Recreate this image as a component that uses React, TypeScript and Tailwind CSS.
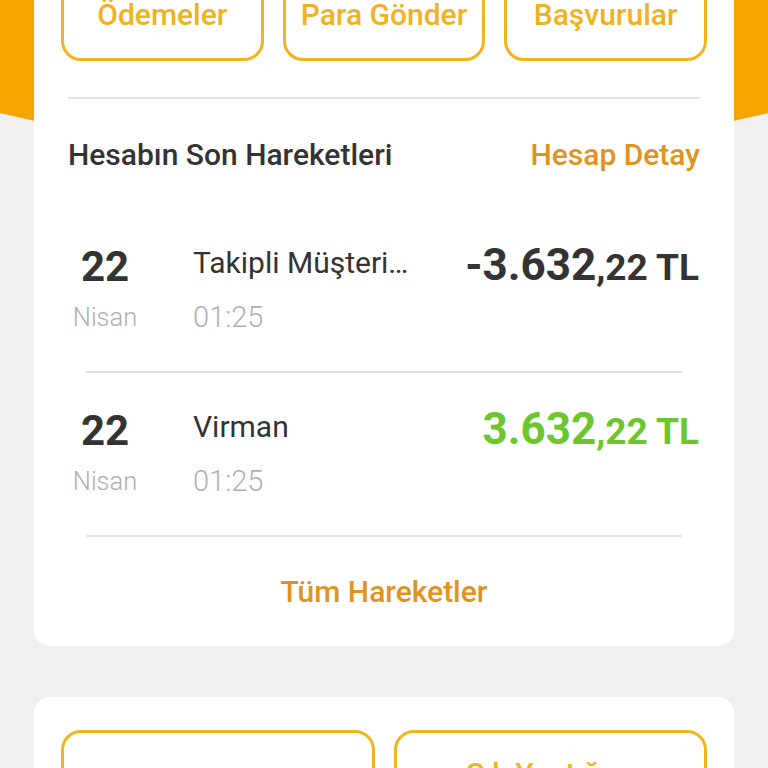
import React from 'react';

type Move = {
  day: string;
  month: string;
  title: string;
  time: string;
  whole: string;
  cents: string;
  positive: boolean;
};

const moves: Move[] = [
  { day: '22', month: 'Nisan', title: 'Takipli Müşteri…', time: '01:25', whole: '-3.632', cents: ',22 TL', positive: false },
  { day: '22', month: 'Nisan', title: 'Virman', time: '01:25', whole: '3.632', cents: ',22 TL', positive: true },
];

function QuickButton({ label }: { label: string }) {
  return (
    <button className="flex-1 h-[108px] rounded-[20px] border-[3px] border-[#f2b41c] bg-white flex items-end justify-center pb-[26px]">
      <span className="text-[30px] leading-[34px] font-medium text-[#f0b220]">{label}</span>
    </button>
  );
}

function MoveRow({ m }: { m: Move }) {
  return (
    <div className="mx-[52px] border-b-2 border-[#e4e4e4] flex items-start pt-[33px] pb-[29px]">
      <div className="w-[90px] -ml-[26px] flex flex-col items-center">
        <span className="text-[42px] leading-[50px] font-bold text-[#333333]">{m.day}</span>
        <span className="text-[25.5px] leading-[50px] font-light text-[#b0b0b0]">{m.month}</span>
      </div>
      <div className="ml-[43px] flex flex-col">
        <span className="text-[30px] leading-[42px] text-[#333333]">{m.title}</span>
        <span className="mt-2 text-[29px] leading-[50px] font-light text-[#b0b0b0]">{m.time}</span>
      </div>
      <div
        className={
          'ml-auto -mr-[17px] leading-[46px] font-bold whitespace-nowrap ' +
          (m.positive ? 'text-[#6cc62e]' : 'text-[#333333]')
        }
      >
        <span className="text-[44px]">{m.whole}</span>
        <span className="text-[37px]">{m.cents}</span>
      </div>
    </div>
  );
}

export default function App() {
  return (
    <div className="relative min-h-screen overflow-hidden bg-[#f1f0ef] font-['Roboto',sans-serif]">
      {/* orange header shape behind the first card */}
      <svg className="absolute left-0 top-0" width="768" height="220" viewBox="0 0 768 220">
        <path d="M0 0 H768 V113 Q384 205 0 113 Z" fill="#f5a400" />
      </svg>

      <div className="relative px-[34px] pb-10">
        {/* account card */}
        <div className="-mt-[71px] bg-white rounded-[16px]">
          <div className="flex gap-[19px] px-[27px] pt-[24px]">
            <QuickButton label="Ödemeler" />
            <QuickButton label="Para Gönder" />
            <QuickButton label="Başvurular" />
          </div>

          <div className="mx-[34px] mt-[36px] border-t-2 border-[#e4e4e4]" />

          <div className="h-[110px] px-[34px] flex items-center justify-between">
            <span className="text-[30px] font-medium text-[#333333]">Hesabın Son Hareketleri</span>
            <span className="text-[30px] font-medium text-[#e0931e]">Hesap Detay</span>
          </div>

          {moves.map((m, i) => (
            <MoveRow key={i} m={m} />
          ))}

          <div className="h-[109px] flex items-center justify-center">
            <span className="text-[30px] font-medium text-[#e0931e]">Tüm Hareketler</span>
          </div>
        </div>

        {/* shortcuts card */}
        <div className="mt-[51px] bg-white rounded-[16px] px-[27px] pt-[33px] pb-[30px] flex gap-[19px]">
          <button className="flex-1 h-[130px] rounded-[20px] border-[3px] border-[#f2b41c] flex justify-center pt-[60px]">
            <span className="text-[30px] leading-[34px] font-medium text-[#f0b220]">Fatura Öde</span>
          </button>
          <button className="flex-1 h-[130px] rounded-[20px] border-[3px] border-[#f2b41c] flex justify-center pt-[24px]">
            <span className="text-[30px] leading-[34px] font-medium text-[#f0b220]">Sık Yaptığım</span>
          </button>
        </div>
      </div>
    </div>
  );
}
